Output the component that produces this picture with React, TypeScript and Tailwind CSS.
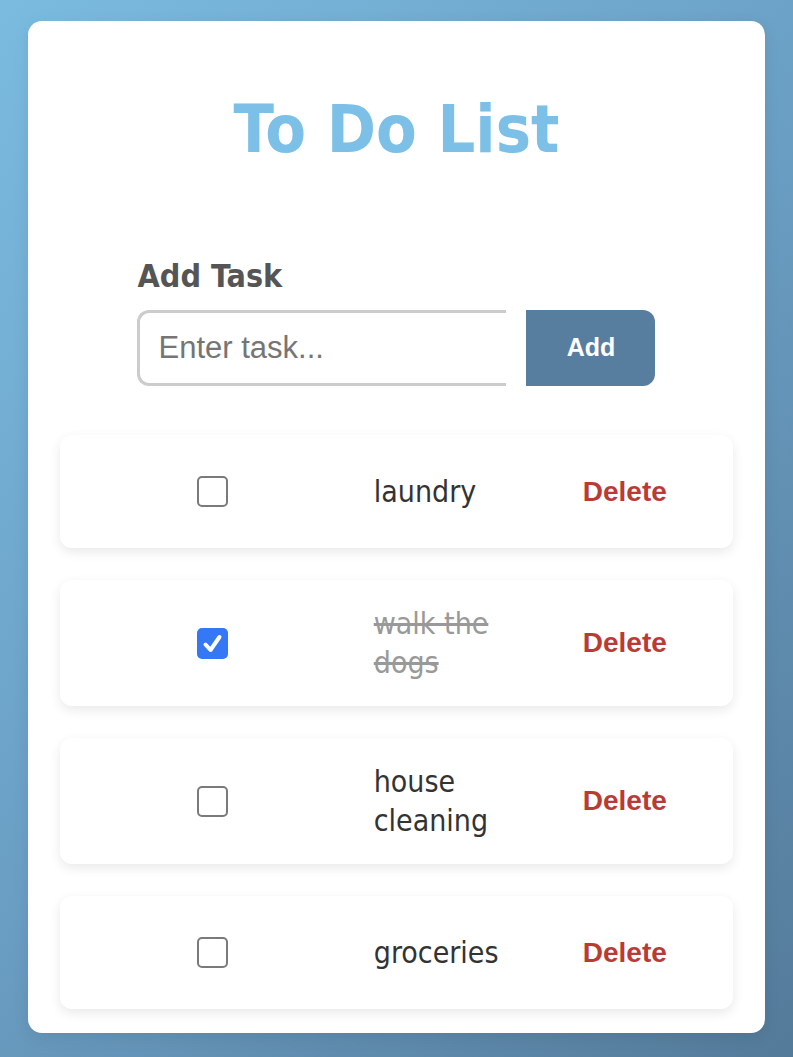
import React, { useState } from "react";

type Task = { id: number; text: string; done: boolean };

const initial: Task[] = [
  { id: 1, text: "laundry", done: false },
  { id: 2, text: "walk the dogs", done: true },
  { id: 3, text: "house cleaning", done: false },
  { id: 4, text: "groceries", done: false },
];

function Check({ checked, onClick }: { checked: boolean; onClick: () => void }) {
  return (
    <button
      type="button"
      onClick={onClick}
      className={
        checked
          ? "flex h-[31px] w-[31px] shrink-0 items-center justify-center rounded-[5px] bg-[#3478f6]"
          : "flex h-[31px] w-[31px] shrink-0 items-center justify-center rounded-[5px] border-2 border-[#7a7a7a] bg-white"
      }
    >
      {checked && (
        <svg width="31" height="31" viewBox="0 0 31 31" fill="none">
          <path
            d="M8.5 16.5 L13.5 22 L22.5 9"
            stroke="white"
            strokeWidth="4"
            strokeLinecap="round"
            strokeLinejoin="round"
          />
        </svg>
      )}
    </button>
  );
}

export default function App() {
  const [tasks, setTasks] = useState<Task[]>(initial);
  const [value, setValue] = useState("");

  const add = () => {
    if (!value.trim()) return;
    setTasks([...tasks, { id: Date.now(), text: value.trim(), done: false }]);
    setValue("");
  };

  return (
    <div className="min-h-screen bg-[linear-gradient(135deg,#7bbbe0_0%,#6a9ec3_50%,#547a99_100%)] pt-[21px] pb-[24px]">
      <div className="mx-auto w-[93%] rounded-[14px] bg-white px-8 pt-[76px] pb-[24px] shadow-[0_4px_16px_rgba(0,0,0,0.08)]">
        <h1 className="text-center font-['DejaVu_Sans_Condensed','DejaVu_Sans',sans-serif] font-stretch-condensed text-[66px] leading-[66px] font-bold text-[#7cc0e7]">
          To Do List
        </h1>

        <div className="mx-auto mt-[98px] w-[518px]">
          <div className="font-['DejaVu_Sans_Condensed','DejaVu_Sans',sans-serif] font-stretch-condensed text-[32px] leading-[31px] font-bold text-[#555555]">
            Add Task
          </div>
          <div className="mt-[18px] flex gap-[20px]">
            <input
              value={value}
              onChange={(e) => setValue(e.target.value)}
              placeholder="Enter task..."
              className="h-[76px] w-[369px] rounded-l-[12px] border-[3px] border-r-0 border-[#cccccc] bg-white pl-[18px] font-['Liberation_Sans',Arial,sans-serif] text-[31px] text-[#333] outline-none placeholder:text-[#757575]"
            />
            <button
              type="button"
              onClick={add}
              className="h-[76px] w-[129px] rounded-r-[12px] bg-[#577e9f] font-['Liberation_Sans',Arial,sans-serif] text-[25px] font-bold text-white"
            >
              Add
            </button>
          </div>
        </div>

        <div className="mt-[49px] flex flex-col gap-[32px]">
          {tasks.map((t) => (
            <div
              key={t.id}
              className="flex items-center rounded-[12px] bg-white py-6 pl-[137px] shadow-[0_4px_12px_rgba(0,0,0,0.09)]"
            >
              <Check
                checked={t.done}
                onClick={() =>
                  setTasks(tasks.map((x) => (x.id === t.id ? { ...x, done: !x.done } : x)))
                }
              />
              <div
                className={
                  t.done
                    ? "ml-[146px] w-[150px] font-['DejaVu_Sans_Condensed','DejaVu_Sans',sans-serif] font-stretch-condensed text-[30px] leading-[39px] text-[#999999] line-through"
                    : "ml-[146px] w-[150px] font-['DejaVu_Sans_Condensed','DejaVu_Sans',sans-serif] font-stretch-condensed text-[30px] leading-[39px] text-[#333333]"
                }
              >
                {t.text}
              </div>
              <button
                type="button"
                onClick={() => setTasks(tasks.filter((x) => x.id !== t.id))}
                className="ml-[59px] h-[65px] font-['Liberation_Sans',Arial,sans-serif] text-[28px] font-bold text-[#b93b36]"
              >
                Delete
              </button>
            </div>
          ))}
        </div>
      </div>
    </div>
  );
}
